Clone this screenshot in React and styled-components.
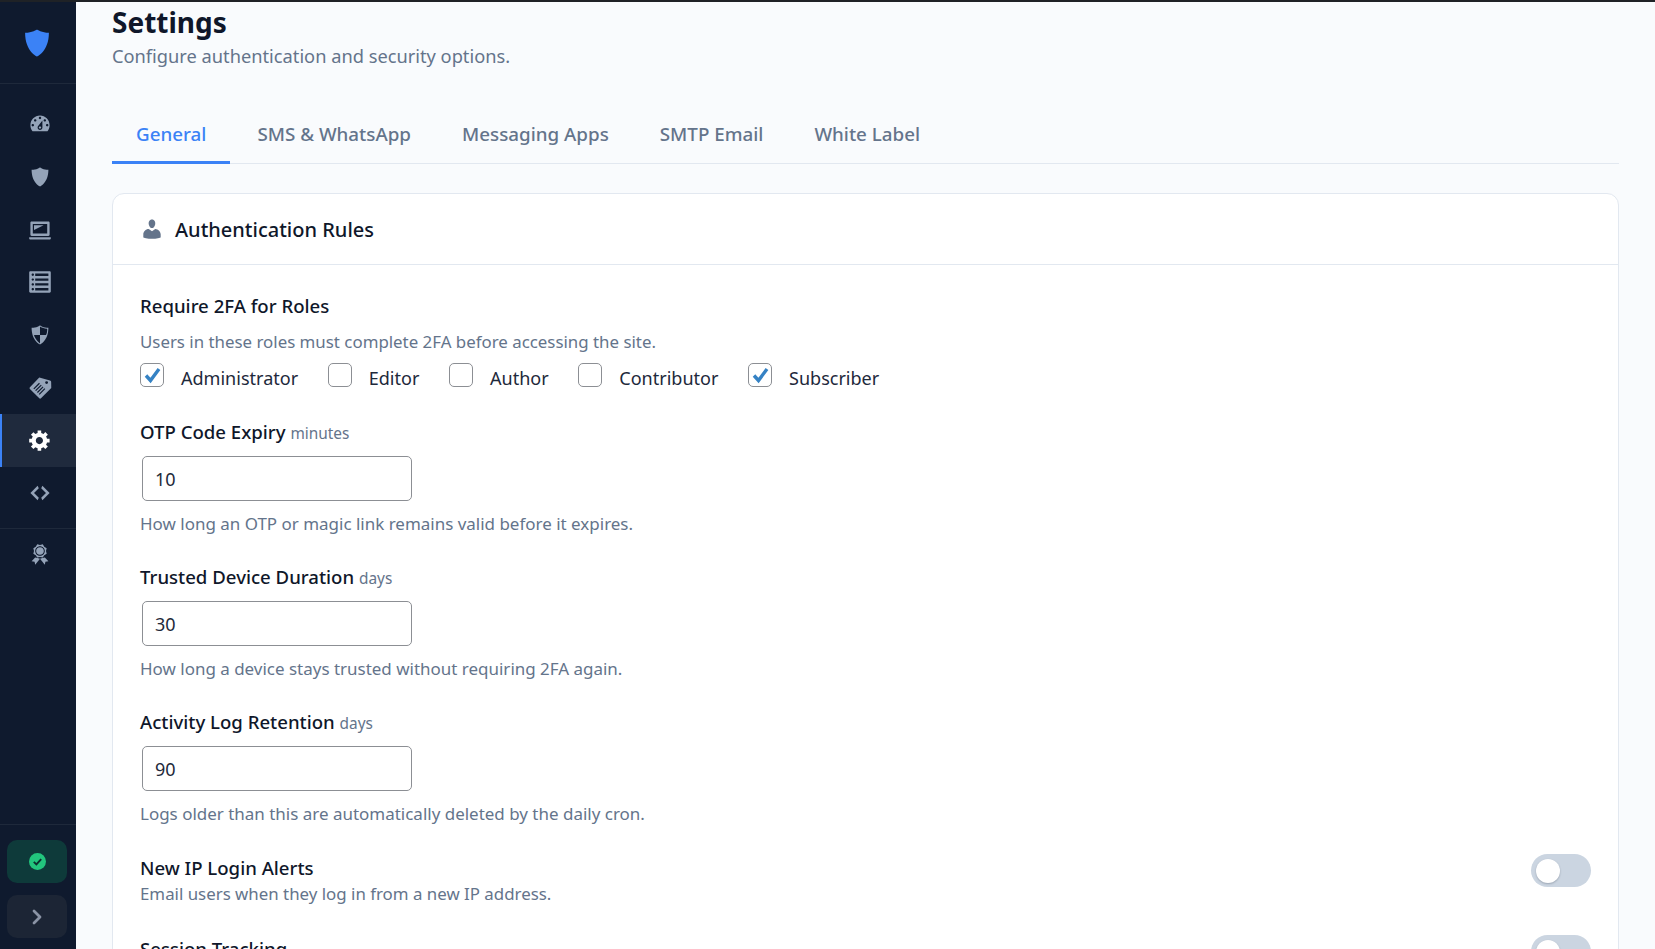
import React from 'react';
import styled, { createGlobalStyle } from 'styled-components';
import { ChevronRight } from 'lucide-react';

const GlobalStyle = createGlobalStyle`
  html, body {
    margin: 0;
    height: 100%;
    overflow: hidden;
    background: #f9fbfd;
  }
  * { box-sizing: border-box; }
  body {
    font-family: "Noto Sans", "Open Sans", sans-serif;
    color: #0f172a;
  }
`;

const icons = {
  dashboard: 'M3.76 16h12.48c1.1-1.37 1.76-3.11 1.76-5 0-4.42-3.58-8-8-8s-8 3.58-8 8c0 1.89.66 3.63 1.76 5zM10 4c.55 0 1 .45 1 1s-.45 1-1 1-1-.45-1-1 .45-1 1-1zM6 6c.55 0 1 .45 1 1s-.45 1-1 1-1-.45-1-1 .45-1 1-1zm8 0c.55 0 1 .45 1 1s-.45 1-1 1-1-.45-1-1 .45-1 1-1zm-5.37 5.55L12 7v6c0 1.1-.9 2-2 2s-2-.9-2-2c0-.57.24-1.08.63-1.45zM4 10c.55 0 1 .45 1 1s-.45 1-1 1-1-.45-1-1 .45-1 1-1zm12 0c.55 0 1 .45 1 1s-.45 1-1 1-1-.45-1-1 .45-1 1-1zm-5 3c0-.55-.45-1-1-1s-1 .45-1 1 .45 1 1 1 1-.45 1-1z',
  shieldAlt: 'M10 2s3 2 7 2c0 11-7 14-7 14S3 15 3 4c4 0 7-2 7-2z',
  laptop: 'M3 3h14c.6 0 1 .4 1 1v10c0 .6-.4 1-1 1H3c-.6 0-1-.4-1-1V4c0-.6.4-1 1-1zm13 2H4v8h12V5zm-3 1H5v4zm6 11v-1H1v1c0 .6.5 1 1.1 1h15.8c.6 0 1.1-.4 1.1-1z',
  list: 'M2 19h16c.55 0 1-.45 1-1V2c0-.55-.45-1-1-1H2c-.55 0-1 .45-1 1v16c0 .55.45 1 1 1zM4 3c.55 0 1 .45 1 1s-.45 1-1 1-1-.45-1-1 .45-1 1-1zm13 0v2H6V3h11zM4 7c.55 0 1 .45 1 1s-.45 1-1 1-1-.45-1-1 .45-1 1-1zm13 0v2H6V7h11zM4 11c.55 0 1 .45 1 1s-.45 1-1 1-1-.45-1-1 .45-1 1-1zm13 0v2H6v-2h11zM4 15c.55 0 1 .45 1 1s-.45 1-1 1-1-.45-1-1 .45-1 1-1zm13 0v2H6v-2h11z',
  shieldHalf: 'M10 2s3 2 7 2c0 11-7 14-7 14S3 15 3 4c4 0 7-2 7-2zm0 8h5s1-1 1-5c0 0-5-1-6-2v7H5c1 4 5 7 5 7v-7z',
  ticket: 'M9.400 1.200l8.900 2.500c.6.150 1 .6 1 1.200L19.400 10l-8.600 8.600c-.4.4-1 .4-1.400 0L1.600 10.800c-.4-.4-.4-1 0-1.400zM15.500 4.300a1.200 1.200 0 1 0 0 2.400 1.200 1.200 0 0 0 0-2.400zM9.200 5.700l-4.700 4.700.7.7 4.700-4.700zM10.700 7.200L6 11.900l.7.7 4.700-4.700zM12.200 8.700l-4.700 4.700.7.7 4.700-4.700zM13.700 10.200l-4.700 4.700.7.7 4.700-4.700z',
  gear: 'M18 12h-2.18c-.17.7-.44 1.35-.81 1.93l1.54 1.54-2.1 2.1-1.54-1.54c-.58.36-1.23.63-1.91.79V19H8v-2.18c-.68-.16-1.33-.43-1.91-.79l-1.54 1.54-2.12-2.12 1.54-1.54c-.36-.58-.63-1.23-.79-1.91H1V9.03h2.17c.16-.7.44-1.35.8-1.94L2.43 5.55l2.1-2.1 1.54 1.54c.58-.37 1.24-.64 1.93-.81V2h3v2.18c.68.16 1.33.43 1.91.79l1.54-1.54 2.12 2.12-1.54 1.54c.36.59.64 1.24.8 1.94H18V12zm-8.5 1.5c1.66 0 3-1.34 3-3s-1.34-3-3-3-3 1.34-3 3 1.34 3 3 3z',
  code: 'M9 6l-4 4 4 4-1 2-6-6 6-6zm2 8l4-4-4-4 1-2 6 6-6 6z',
  award: 'M4.460 5.160L5 7.460l-.54 2.290 2.010 1.240L7.700 13l2.300-.54 2.300.54 1.230-2.010 2.010-1.240L15 7.460l.54-2.300-2-1.240-1.240-2.010-2.300.55-2.290-.54-1.250 2zm5.550 6.340c-2.210 0-4.010-1.790-4.010-4 0-2.220 1.800-4.010 4.010-4.010 2.210 0 4 1.790 4 4.010 0 2.210-1.790 4-4 4zM10 4.300c-1.800 0-3.200 1.400-3.200 3.200s1.400 3.200 3.200 3.200 3.200-1.400 3.200-3.200-1.400-3.200-3.200-3.200zm-4.030 8.650L8 13.400l2 .5-4 5.100-.5-2.500-2.500-.5zm8.060 0L12 13.400l-2 .5 4 5.100.5-2.500 2.500-.5z',
  user: 'M10 9.250c-2.270 0-2.730-3.440-2.730-3.440C7 4.020 7.820 2 9.970 2c2.160 0 2.980 2.020 2.710 3.810 0 0-.41 3.440-2.680 3.440zm0 2.570L12.720 10c2.390 0 4.520 2.330 4.520 4.530v2.490s-3.650 1.130-7.240 1.130c-3.650 0-7.240-1.130-7.240-1.130v-2.490c0-2.250 1.940-4.480 4.470-4.480z',
};

const Icon = ({ name, size = 24 }) => (
  <svg width={size} height={size} viewBox="0 0 20 20" fill="currentColor" fillRule="evenodd">
    <path d={icons[name]} />
  </svg>
);

const NAV = [
  ['dashboard'],
  ['shieldAlt'],
  ['laptop'],
  ['list'],
  ['shieldHalf'],
  ['ticket'],
  ['gear', true],
  ['code'],
];

const ROLES = [
  ['Administrator', true],
  ['Editor', false],
  ['Author', false],
  ['Contributor', false],
  ['Subscriber', true],
];

const FIELDS = [
  ['OTP Code Expiry', 'minutes', '10', 'How long an OTP or magic link remains valid before it expires.'],
  ['Trusted Device Duration', 'days', '30', 'How long a device stays trusted without requiring 2FA again.'],
  ['Activity Log Retention', 'days', '90', 'Logs older than this are automatically deleted by the daily cron.'],
];

const TABS = ['General', 'SMS & WhatsApp', 'Messaging Apps', 'SMTP Email', 'White Label'];

export default function App() {
  return (
    <>
      <GlobalStyle />
      <Page>
        <Sidebar>
          <Logo>
            <Icon name="shieldAlt" size={34} />
          </Logo>
          <Nav>
            {NAV.map(([name, active]) => (
              <NavItem key={name} $active={active}>
                <Icon name={name} />
              </NavItem>
            ))}
          </Nav>
          <NavGroup>
            <NavItem>
              <Icon name="award" />
            </NavItem>
          </NavGroup>
          <SideFooter>
            <SideButton $ok>
              <svg width="17" height="17" viewBox="0 0 17 17">
                <circle cx="8.500" cy="8.500" r="8.500" fill="#22c57d" />
                <path d="M4.800 8.800l2.600 2.600 4.800-5.200" fill="none" stroke="#0d2f30" strokeWidth="1.900" />
              </svg>
            </SideButton>
            <SideButton>
              <ChevronRight size={24} strokeWidth={2.8} />
            </SideButton>
          </SideFooter>
        </Sidebar>

        <Main>
          <Title>Settings</Title>
          <Subtitle>Configure authentication and security options.</Subtitle>

          <Tabs>
            {TABS.map((t, i) => (
              <Tab key={t} $active={i === 0}>{t}</Tab>
            ))}
          </Tabs>

          <Card>
            <CardHeader>
              <Icon name="user" />
              <CardTitle>Authentication Rules</CardTitle>
            </CardHeader>
            <CardBody>
              <FieldLabel>Require 2FA for Roles</FieldLabel>
              <RolesHint>Users in these roles must complete 2FA before accessing the site.</RolesHint>
              <Roles>
                {ROLES.map(([role, on]) => (
                  <Role key={role}>
                    <Check>
                      {on && (
                        <svg width="21" height="19" viewBox="0 0 21 19">
                          <path d="M4 9.500l4.500 5L17 3" fill="none" stroke="#3582c4" strokeWidth="3.400" />
                        </svg>
                      )}
                    </Check>
                    {role}
                  </Role>
                ))}
              </Roles>

              {FIELDS.map(([label, unit, value, hint]) => (
                <Field key={label}>
                  <FieldLabel>
                    {label} <Unit>{unit}</Unit>
                  </FieldLabel>
                  <NumberInput defaultValue={value} readOnly />
                  <FieldHint>{hint}</FieldHint>
                </Field>
              ))}

              <ToggleRow>
                <ToggleText>
                  <FieldLabel>New IP Login Alerts</FieldLabel>
                  <Hint>Email users when they log in from a new IP address.</Hint>
                </ToggleText>
                <Toggle />
              </ToggleRow>
              <ToggleRow>
                <ToggleText>
                  <FieldLabel>Session Tracking</FieldLabel>
                </ToggleText>
                <Toggle />
              </ToggleRow>
            </CardBody>
          </Card>
        </Main>
      </Page>
    </>
  );
}

const Page = styled.div`
  display: flex;
  height: 949px;
  overflow: hidden;
  border-top: 2px solid #1f2226;
`;

const Sidebar = styled.aside`
  width: 76px;
  flex-shrink: 0;
  background: #0f1a2e;
  display: flex;
  flex-direction: column;
`;

const Logo = styled.div`
  height: 82px;
  display: flex;
  align-items: center;
  justify-content: center;
  padding-right: 3px;
  color: #3b82f6;
  border-bottom: 1px solid #1e293b;
`;

const Nav = styled.nav`
  padding-top: 14px;
  padding-bottom: 8px;
  border-bottom: 1px solid #1e293b;
`;

const NavItem = styled.div`
  height: 52.700px;
  display: flex;
  align-items: center;
  justify-content: center;
  padding-left: 1px;
  color: ${(p) => (p.$active ? '#ffffff' : '#94a3b8')};
  background: ${(p) => (p.$active ? '#1f2a3d' : 'transparent')};
  border-left: 2px solid ${(p) => (p.$active ? '#3b82f6' : 'transparent')};
`;

const NavGroup = styled.div`
  flex: 1;

  ${NavItem} {
    height: 51px;
  }
`;

const SideFooter = styled.div`
  border-top: 1px solid #1e293b;
  padding: 15px 9px 11px 7px;
  display: flex;
  flex-direction: column;
  gap: 12px;
`;

const SideButton = styled.div`
  height: 43px;
  border-radius: 10px;
  display: flex;
  align-items: center;
  justify-content: center;
  color: #8a93a5;
  background: ${(p) => (p.$ok ? '#0e3a3a' : '#1c2535')};
`;

const Main = styled.main`
  flex: 1;
  min-width: 0;
  padding: 3px 36px 0;
`;

const Title = styled.h1`
  margin: 0;
  font-size: 28px;
  line-height: 34px;
  font-weight: 700;
  color: #0f172a;
`;

const Subtitle = styled.p`
  margin: 4px 0 0;
  font-size: 18.250px;
  line-height: 26px;
  color: #64748b;
`;

const Tabs = styled.div`
  margin-top: 35px;
  display: flex;
  gap: 3px;
  border-bottom: 1px solid #e2e8f0;
`;

const Tab = styled.div`
  height: 60px;
  margin-bottom: -1px;
  padding: 2px 24px 0;
  display: flex;
  align-items: center;
  font-size: 18.800px;
  font-weight: 500;
  color: ${(p) => (p.$active ? '#3b82f6' : '#64748b')};
  border-bottom: 3px solid ${(p) => (p.$active ? '#3b82f6' : 'transparent')};
`;

const Card = styled.section`
  margin-top: 29px;
  background: #ffffff;
  border: 1px solid #e2e8f0;
  border-radius: 12px;
`;

const CardHeader = styled.div`
  height: 71px;
  padding: 0 27px;
  display: flex;
  align-items: center;
  gap: 11px;
  color: #64748b;
  border-bottom: 1px solid #e2e8f0;
`;

const CardTitle = styled.h2`
  margin: 0;
  font-size: 20px;
  font-weight: 500;
  color: #0f172a;
`;

const CardBody = styled.div`
  padding: 28px 27px 0;
`;

const FieldLabel = styled.div`
  font-size: 18.600px;
  line-height: 26px;
  font-weight: 500;
  color: #0f172a;
`;

const Unit = styled.span`
  font-size: 15.400px;
  line-height: 1;
  font-weight: 400;
  color: #64748b;
`;

const Hint = styled.div`
  font-size: 16.880px;
  line-height: 26px;
  color: #64748b;
`;

const RolesHint = styled(Hint)`
  margin-top: 10px;
`;

const FieldHint = styled(Hint)`
  font-size: 16.980px;
`;

const Roles = styled.div`
  margin-top: 9px;
  margin-bottom: 29px;
  display: flex;
  gap: 29.600px;
`;

const Role = styled.label`
  display: flex;
  align-items: center;
  gap: 17px;
  height: 26px;
  padding-top: 2px;
  font-size: 18.050px;
  color: #1e293b;
`;

const Check = styled.span`
  width: 24px;
  height: 24px;
  margin-top: -6px;
  display: flex;
  align-items: center;
  justify-content: center;
  background: #ffffff;
  border: 1px solid #8c8f94;
  border-radius: 5px;
`;

const Field = styled.div`
  margin-bottom: 27px;
`;

const NumberInput = styled.input`
  display: block;
  width: 270px;
  height: 45px;
  margin: 11px 0 10px 2px;
  padding: 0 12px;
  font-family: inherit;
  font-size: 18px;
  color: #1e293b;
  background: #ffffff;
  border: 1px solid #8c8f94;
  border-radius: 5px;
  outline: none;
`;

const ToggleRow = styled.div`
  display: flex;
  justify-content: space-between;
  align-items: flex-start;
  margin-bottom: 28px;
`;

const ToggleText = styled.div`
  padding-top: 1px;
`;

const Toggle = styled.span`
  position: relative;
  width: 60px;
  height: 33px;
  border-radius: 17px;
  background: #cbd5e1;

  &::after {
    content: '';
    position: absolute;
    left: 5px;
    top: 5px;
    width: 24px;
    height: 24px;
    border-radius: 50%;
    background: #ffffff;
    box-shadow: 0 1px 2px rgba(15, 23, 42, 0.25);
  }
`;
